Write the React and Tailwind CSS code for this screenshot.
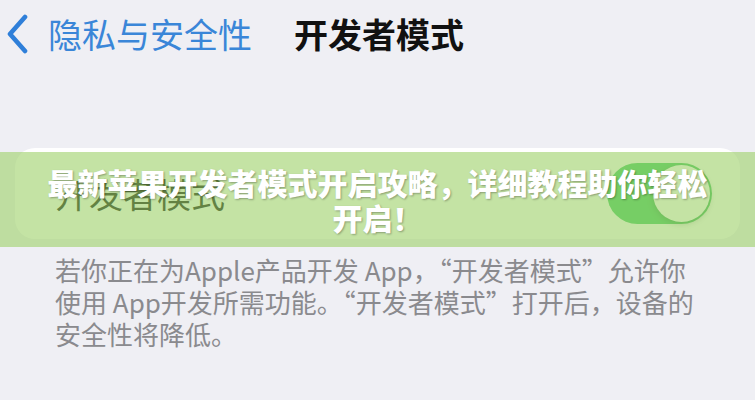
export default function App() {
  return (
    <div className="relative w-[755px] h-[400px] overflow-hidden bg-[#efeff4] font-['Noto_Sans_CJK_SC','Noto_Sans',sans-serif]">
      <div className="flex items-center h-[68px] pl-[5px]">
        <svg width="24" height="40" viewBox="0 0 24 40" fill="none">
          <path d="M20 3 L5 20 L20 37" stroke="#2f7fd9" strokeWidth="4.6" strokeLinecap="round" strokeLinejoin="round" />
        </svg>
        <span className="ml-[19px] text-[34px] leading-none text-[#3a86d8]">隐私与安全性</span>
        <span className="ml-[42px] text-[34px] leading-none font-semibold text-[#111]">开发者模式</span>
      </div>
      <div className="mx-[15px] mt-[80px] h-[91px] rounded-[20px] bg-white flex items-center justify-between pl-[40px] pr-[28px]">
        <span className="text-[34px] leading-none text-black">开发者模式</span>
        <div className="w-[105px] h-[61px] rounded-full bg-[#34c759] flex items-center justify-end pr-[2px]">
          <div className="w-[57px] h-[57px] rounded-full bg-white shadow-[0_2px_6px_rgba(0,0,0,0.25)]" />
        </div>
      </div>
      <div className="pl-[55px] pt-[15px] text-[26px] leading-[32px] text-[#8a8a8e]">
        若你正在为Apple产品开发 App，“开发者模式”允许你
        <br />
        使用 App开发所需功能。“开发者模式”打开后，设备的
        <br />
        安全性将降低。
      </div>
      <div className="absolute inset-x-0 top-[152px] h-[95px] bg-[rgba(160,210,108,0.62)] flex items-center justify-center text-center text-white font-black text-[30px] leading-[35px] [text-shadow:1px_1px_2px_rgba(0,0,0,0.3)]">
        <div>
          最新苹果开发者模式开启攻略，详细教程助你轻松
          <br />
          开启！
        </div>
      </div>
    </div>
  );
}
